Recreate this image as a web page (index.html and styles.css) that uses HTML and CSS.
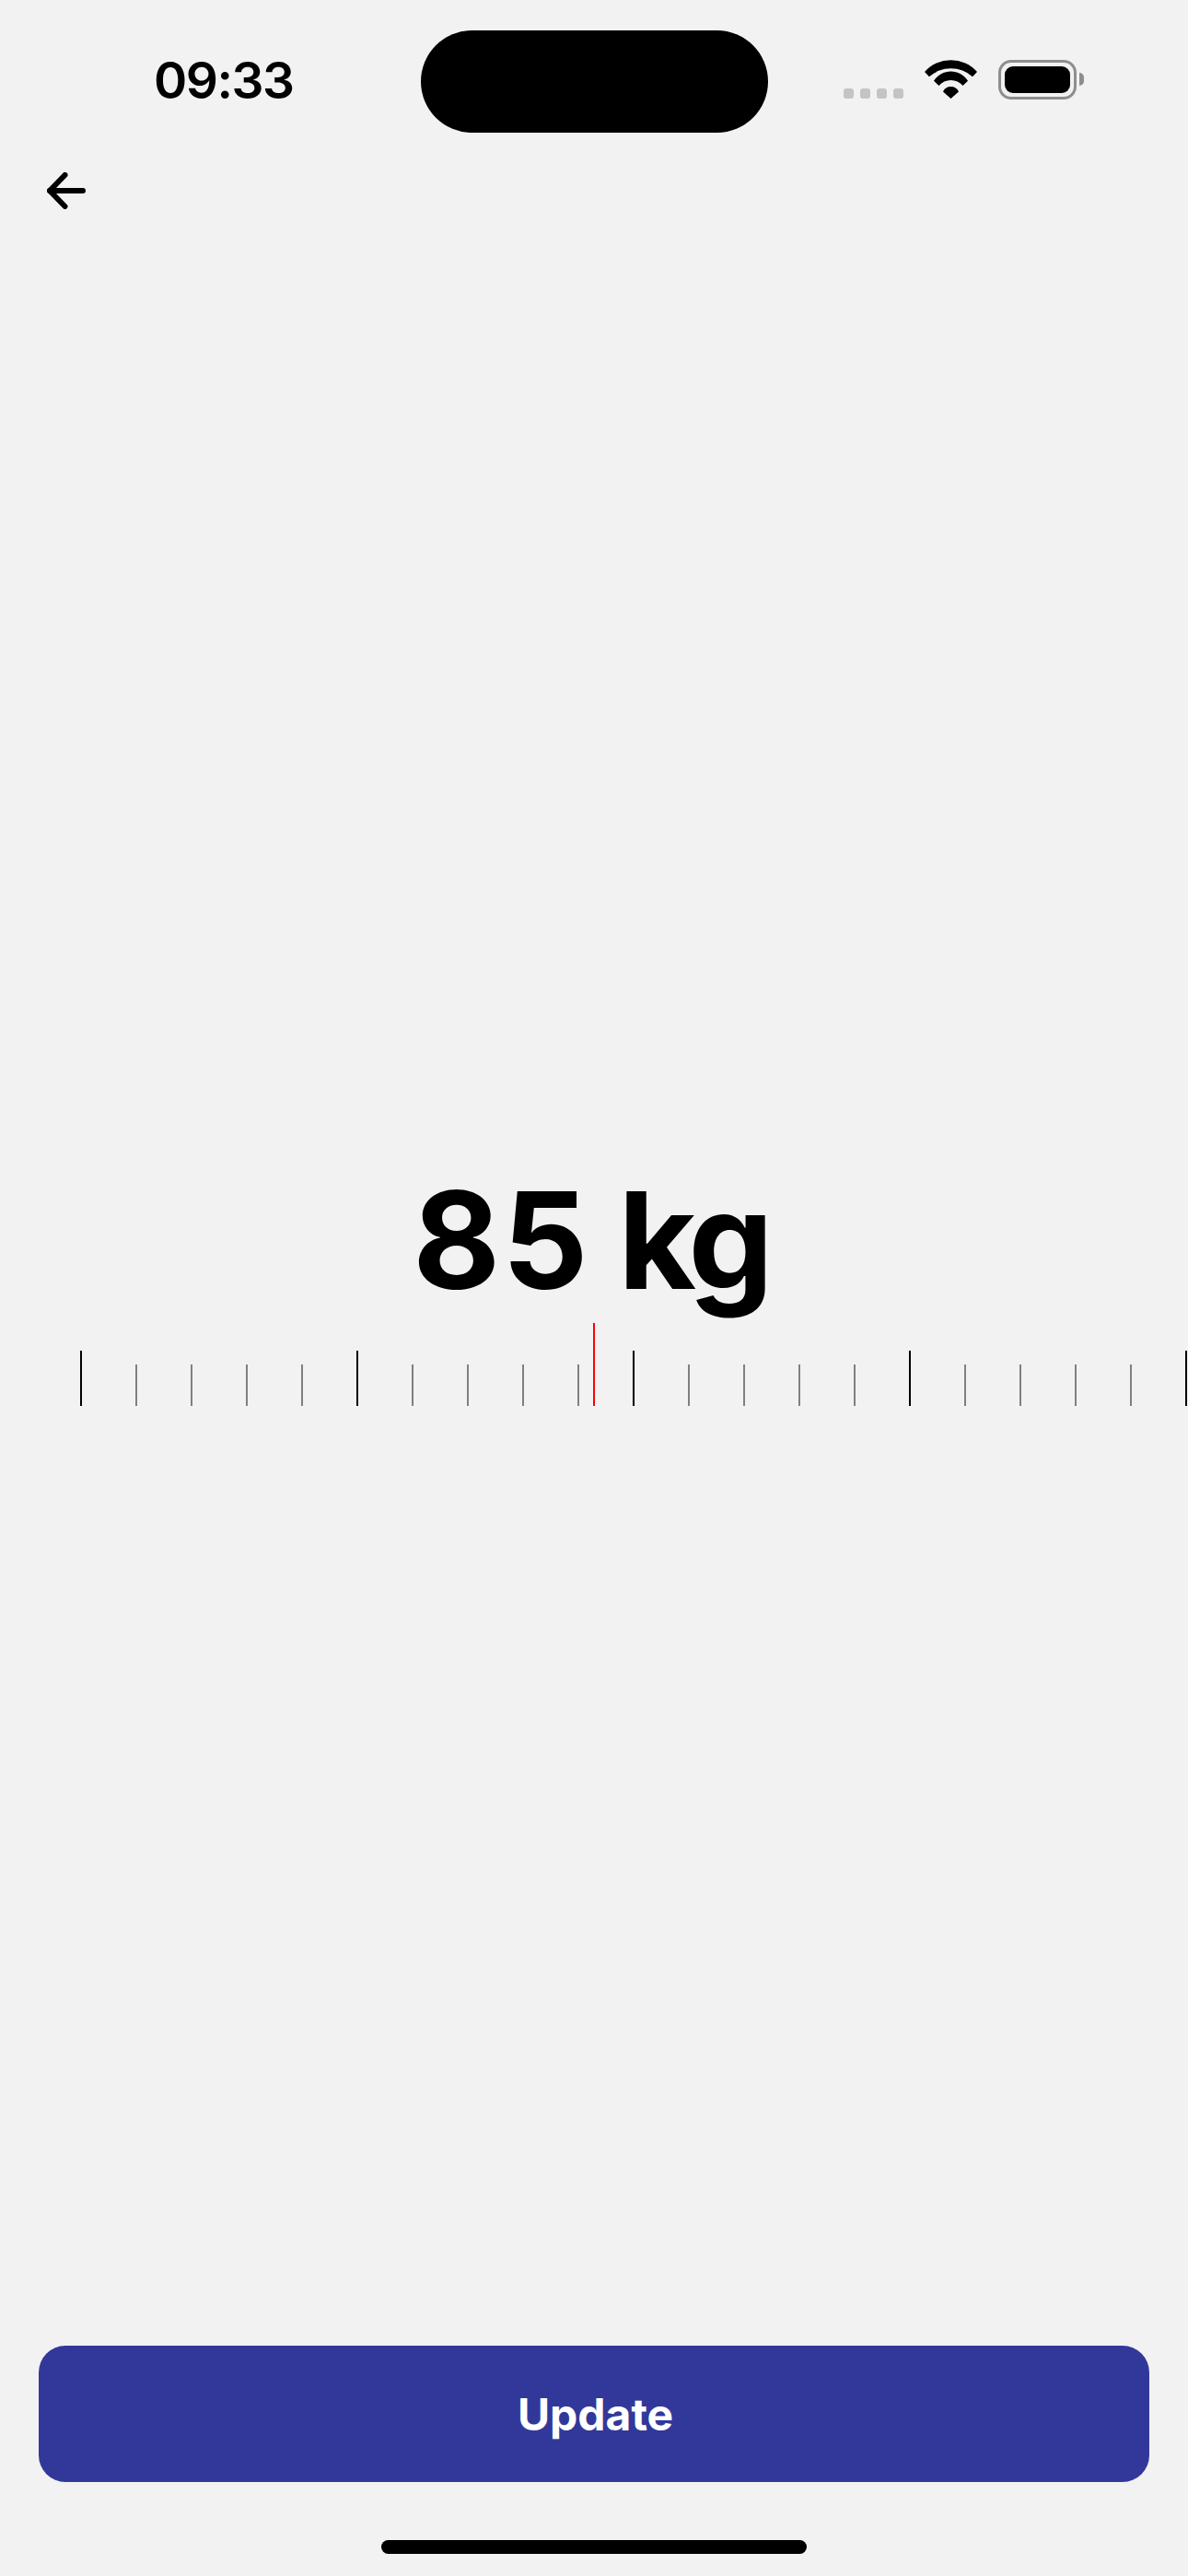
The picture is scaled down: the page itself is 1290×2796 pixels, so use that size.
FILE: index.html
```html
<!DOCTYPE html>
<html lang="en">
<head>
  <meta charset="UTF-8" />
  <meta name="viewport" content="width=device-width, initial-scale=1.0" />
  <title>Update weight</title>
  <link rel="stylesheet" href="styles.css">
</head>
<body>
  <header class="status-bar">
    <span class="time">09:33</span>
    <div class="island"></div>
    <div class="status-icons">
      <div class="signal">
        <i></i><i></i><i></i><i></i>
      </div>
      <svg class="wifi" width="57" height="42" viewBox="0 0 57 42">
        <path d="M0 13 A38 38 0 0 1 57 13 L52 18.3 A35 35 0 0 0 5 18.3 Z" />
        <path d="M10 22.7 A22 22 0 0 1 47 22.7 L41.5 28 A17 17 0 0 0 15.5 28 Z" />
        <path d="M20 34.5 A9.3 9.3 0 0 1 37 34.5 L28.5 42 Z" />
      </svg>
      <div class="battery">
        <div class="battery-level"></div>
      </div>
      <div class="battery-cap"></div>
    </div>
  </header>

  <a class="back" href="#" aria-label="Back">
    <svg width="42" height="40" viewBox="0 0 42 40" fill="none" stroke="#000" stroke-width="6" stroke-linecap="round" stroke-linejoin="round">
      <path d="M19.5 3 L3 20 L19.5 37" />
      <path d="M3 20 H39" />
    </svg>
  </a>

  <main class="picker">
    <div class="value"><span class="number">85</span> <span class="unit">kg</span></div>
    <div class="ruler">
      <span class="marker"></span>
      <i class="tick major"></i><i class="tick"></i><i class="tick"></i><i class="tick"></i><i class="tick"></i>
      <i class="tick major"></i><i class="tick"></i><i class="tick"></i><i class="tick"></i><i class="tick"></i>
      <i class="tick major"></i><i class="tick"></i><i class="tick"></i><i class="tick"></i><i class="tick"></i>
      <i class="tick major"></i><i class="tick"></i><i class="tick"></i><i class="tick"></i><i class="tick"></i>
      <i class="tick major"></i>
    </div>
  </main>

  <footer class="actions">
    <button class="update-btn" type="button">Update</button>
    <div class="home-bar"></div>
  </footer>
</body>
</html>
```

FILE: styles.css
```css
body {
  margin: 0;
  width: 1290px;
  height: 2796px;
  overflow: hidden;
  display: flex;
  flex-direction: column;
  background: #f2f2f2;
  color: #000;
  font-family: Inter, "Liberation Sans", sans-serif;
}

.status-bar {
  display: grid;
  grid-template-columns: 1fr 377px 1fr;
  height: 111px;
  padding-top: 33px;
}
.time {
  padding-left: 167px;
  padding-top: 24px;
  font-size: 55px;
  font-weight: 600;
  letter-spacing: -1.5px;
  line-height: 60px;
}
.island {
  background: #000;
  border-radius: 56px;
}
.status-icons {
  display: flex;
  align-items: flex-start;
  padding: 32px 0 0 82px;
}
.signal {
  display: flex;
  gap: 7px;
  margin: 31px 23px 0 0;
}
.signal i {
  width: 11px;
  height: 11px;
  border-radius: 3px;
  background: #c4c4c4;
}
.wifi {
  margin-right: 23px;
  fill: #000;
}
.battery {
  box-sizing: border-box;
  width: 85px;
  height: 43px;
  padding: 4px;
  border: 3px solid #8e8e8e;
  border-radius: 14px;
}
.battery-level {
  height: 100%;
  background: #000;
  border-radius: 9px;
}
.battery-cap {
  width: 5px;
  height: 14px;
  margin: 14px 0 0 3px;
  background: #8e8e8e;
  border-radius: 0 7px 7px 0;
}

.back {
  display: block;
  width: 42px;
  height: 40px;
  margin: 43px 0 0 51px;
}
.back svg {
  display: block;
}

.picker {
  flex: 1;
  display: flex;
  flex-direction: column;
  padding-top: 1031px;
}
.value {
  padding-right: 7px;
  text-align: center;
  font-size: 146px;
  font-weight: 700;
  line-height: 176px;
  word-spacing: -4px;
}
.number {
  letter-spacing: 2px;
}
.unit {
  letter-spacing: -5px;
}
.ruler {
  position: relative;
  display: flex;
  align-items: flex-end;
  gap: 58px;
  height: 90px;
  margin-top: 2px;
  padding-left: 87px;
}
.tick {
  flex: none;
  width: 2px;
  height: 45px;
  background: #808080;
}
.tick.major {
  height: 60px;
  background: #000;
}
.marker {
  position: absolute;
  left: 644px;
  bottom: 0;
  width: 2px;
  height: 90px;
  background: #f00;
}

.actions {
  display: flex;
  flex-direction: column;
  align-items: center;
  padding-bottom: 24px;
}
.update-btn {
  width: 1206px;
  height: 148px;
  padding-left: 9px;
  border: none;
  border-radius: 29px;
  background: #32389a;
  color: #fff;
  font-family: inherit;
  font-size: 48px;
  font-weight: 700;
}
.home-bar {
  width: 462px;
  height: 15px;
  margin-top: 63px;
  background: #000;
  border-radius: 8px;
}
```
